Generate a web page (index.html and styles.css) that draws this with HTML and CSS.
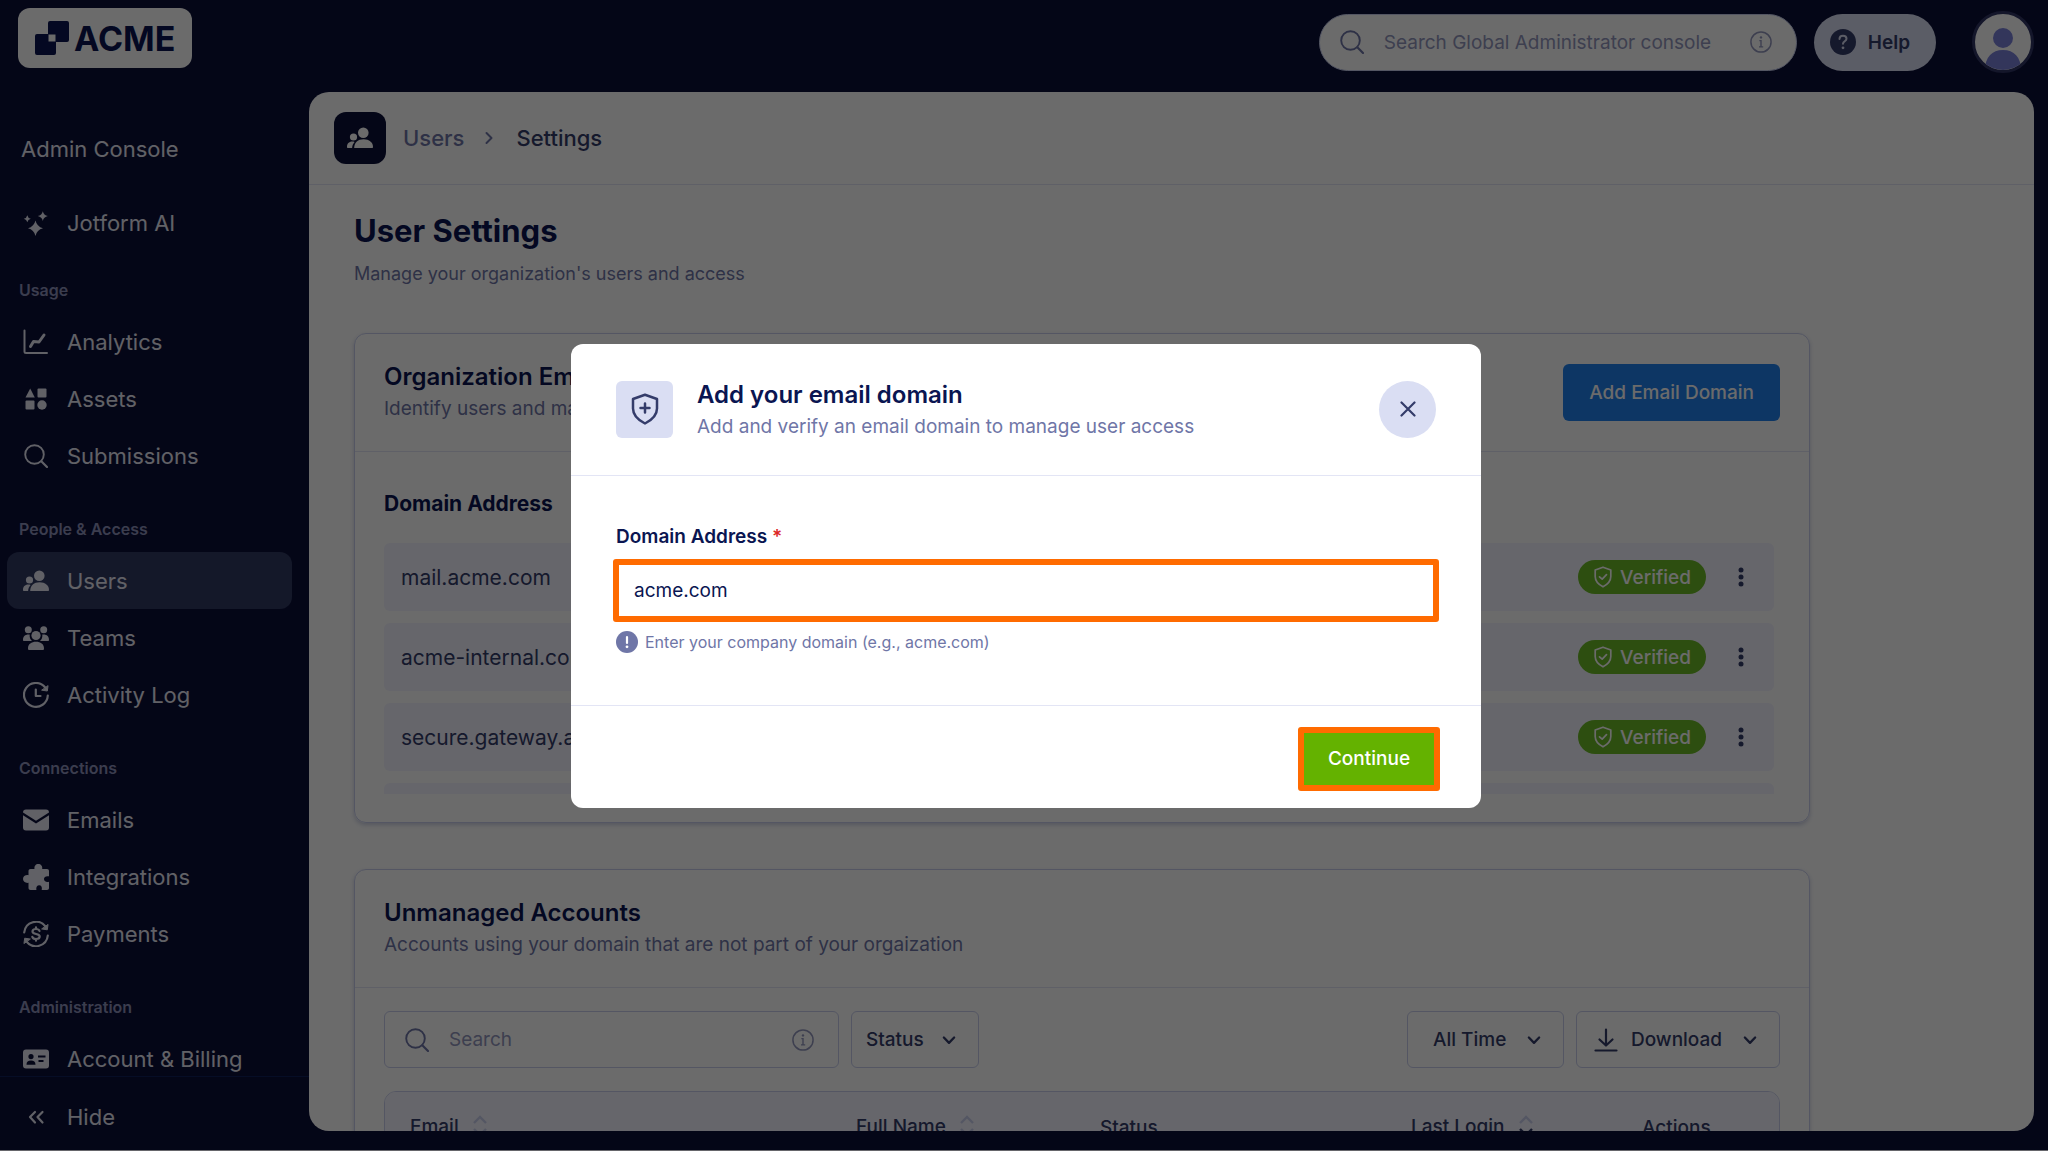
FILE: index.html
```
<!DOCTYPE html>
<html lang="en">
<head>
  <meta charset="UTF-8" />
  <meta name="viewport" content="width=device-width, initial-scale=1.0"/>
  <title>User Settings - Admin Console</title>
  <link rel="stylesheet" href="styles.css">
</head>
<body>

  <!-- shared icons -->
  <svg class="sprite" aria-hidden="true">
    <symbol id="i-search" viewBox="0 0 24 24"><circle cx="10.500" cy="10.500" r="9.300" fill="none" stroke="currentColor" stroke-width="1.900"/><path d="M17.300 17.300 23 23" stroke="currentColor" stroke-width="2.200" stroke-linecap="round"/></symbol>
    <symbol id="i-info" viewBox="0 0 24 24"><circle cx="12" cy="12" r="11" fill="none" stroke="currentColor" stroke-width="1.600"/><circle cx="12" cy="7" r="1.300" fill="currentColor"/><path d="M10.200 10.500H12V17M9.800 17.300h4.600" fill="none" stroke="currentColor" stroke-width="1.500"/></symbol>
    <symbol id="i-users" viewBox="0 0 26 22"><circle cx="16.300" cy="5.700" r="5.300" fill="currentColor"/><path d="M7.200 21C7.200 15.500 11 12.300 16.600 12.300S26 15.500 26 20c0 .6-.4 1-1 1z" fill="currentColor"/><circle cx="6.500" cy="10" r="3.600" fill="currentColor"/><path d="M0 20c0-3 1.800-5.400 5.300-5.400.9 0 1.600.1 2.300.4C6 16.800 5.200 18.800 5.100 21H1c-.6 0-1-.4-1-1z" fill="currentColor"/></symbol>
    <symbol id="i-down" viewBox="0 0 14 14"><path d="M2.500 4.800 7 9.500l4.500-4.700" fill="none" stroke="currentColor" stroke-width="2" stroke-linecap="round" stroke-linejoin="round"/></symbol>
    <symbol id="i-sort" viewBox="0 0 16 24"><path d="M2 8l6-6 6 6M2 14l6 6 6-6" fill="none" stroke="currentColor" stroke-width="2.400"/></symbol>
    <symbol id="i-sort-desc" viewBox="0 0 16 24"><path d="M2 8l6-6 6 6" fill="none" stroke="currentColor" stroke-width="2.400"/><path d="M2 14l6 6 6-6" fill="none" stroke="#343c6a" stroke-width="2.400"/></symbol>
    <symbol id="i-check" viewBox="0 0 18 22"><path d="M9 1.200 16.800 4v6.500c0 4.500-3 7.800-7.800 10.300C4.200 18.300 1.200 15 1.200 10.500V4z" fill="none" stroke="currentColor" stroke-width="1.700" stroke-linejoin="round"/><path d="M5.500 10.800 8.200 13.200 12.500 8.600" fill="none" stroke="currentColor" stroke-width="1.700" stroke-linecap="round" stroke-linejoin="round"/></symbol>
    <symbol id="i-dots" viewBox="0 0 6 20"><circle cx="3" cy="3" r="2.500" fill="currentColor"/><circle cx="3" cy="10" r="2.500" fill="currentColor"/><circle cx="3" cy="17" r="2.500" fill="currentColor"/></symbol>
  </svg>

  <div class="app">
    <aside class="sidebar">
      <a class="logo" href="#">
        <svg width="36" height="36" viewBox="0 0 36 36"><path fill-rule="evenodd" fill="currentColor" d="M16 1h17a2 2 0 0 1 2 2v17a2 2 0 0 1-2 2H22v11a2 2 0 0 1-2 2H3a2 2 0 0 1-2-2V16a2 2 0 0 1 2-2h11V3a2 2 0 0 1 2-2zM14.500 14.500v7h7v-7z"/></svg>
        ACME
      </a>
      <nav class="menu">
        <div class="menu-title">Admin Console</div>
        <a class="item" href="#"><svg viewBox="0 0 26 26" fill="currentColor"><path d="M12.500 10.500Q13.800 16.500 20 18.300 13.800 19.800 12.500 26 11 19.800 5 18.300 11 16.500 12.500 10.500zM19.800 1.300Q20.700 5.200 24.800 6.100 20.700 7 19.800 11 18.900 7 14.800 6.100 18.900 5.200 19.800 1.300zM4.300 5.300Q4.900 8.200 7.800 8.800 4.900 9.400 4.300 12.300 3.700 9.400.8 8.800 3.700 8.200 4.300 5.300z"/></svg>Jotform AI</a>

        <div class="group first">Usage</div>
        <a class="item" href="#"><svg viewBox="0 0 26 26" fill="none" stroke="currentColor" stroke-linecap="round" stroke-linejoin="round"><path d="M1.500 1.500V22.500a1.500 1.500 0 0 0 1.500 1.500H24" stroke-width="2"/><path d="M7.500 17.500 10.500 12.500 16 13 21 6" stroke-width="3"/></svg>Analytics</a>
        <a class="item" href="#"><svg viewBox="0 0 26 26" fill="currentColor"><path d="M7.200 2.500 11.800 11.500H2.500z"/><rect x="14.500" y="2.500" width="9" height="9" rx="1"/><rect x="2.500" y="14.500" width="9" height="9" rx="1"/><circle cx="19" cy="19" r="4.700"/></svg>Assets</a>
        <a class="item" href="#"><svg viewBox="-1 -1 26 26"><use href="#i-search" width="24" height="24"/></svg>Submissions</a>

        <div class="group">People &amp; Access</div>
        <a class="item active" href="#"><svg viewBox="0 0 26 26"><use href="#i-users" y="2" width="26" height="22"/></svg>Users</a>
        <a class="item" href="#"><svg viewBox="0 0 26 26" fill="currentColor"><circle cx="5.300" cy="4.800" r="3.500"/><circle cx="20.700" cy="4.800" r="3.500"/><circle cx="13" cy="10.500" r="4.600"/><path d="M5 23.500C5 19 8.500 16.800 13 16.800s8 2.200 8 6.700c0 1-.5 1.500-1.500 1.500h-13C5.500 25 5 24.500 5 23.500zM0 15c0-3.300 1.800-5.500 5.500-5.500h1.200c-.3 2.800.5 4.800 2.300 6.500H1c-.6 0-1-.4-1-1zM26 15c0-3.300-1.800-5.500-5.500-5.500h-1.200c.3 2.800-.5 4.800-2.300 6.500h8c.6 0 1-.4 1-1z"/></svg>Teams</a>
        <a class="item" href="#"><svg viewBox="0 0 26 26" fill="none" stroke="currentColor" stroke-width="2.200" stroke-linecap="round" stroke-linejoin="round"><path d="M24.800 13.500A11.900 11.900 0 1 1 22 5.200"/><path d="M12.800 7.500V14h4.700"/><path d="M25 4 24.300 9 19 8.200z" fill="currentColor" stroke-width="1"/></svg>Activity Log</a>

        <div class="group">Connections</div>
        <a class="item" href="#"><svg viewBox="0 0 26 26" fill="currentColor"><path d="M0 5.500C0 3.500 1 2.500 3 2.500h20c2 0 3 1 3 3L13 13.800z"/><path d="M0 8.300 13 16.600 26 8.300V20.500c0 2-1 3-3 3H3c-2 0-3-1-3-3z"/></svg>Emails</a>
        <a class="item" href="#"><svg viewBox="0 0 26 26" fill="currentColor"><path d="M11.500 5C11 2 12.800 0 15.300 0s4.400 2 3.900 5H24c1.200 0 2 .8 2 2v5.300c-3-.6-5 .6-5 2.700s2 3.400 5 2.700V24c0 1.200-.8 2-2 2h-5.300c.7-3-.5-4.700-2.500-4.700s-3.400 1.700-2.800 4.700H7.500c-1.200 0-2-.8-2-2v-5.200C2.500 19.300 0 17.500 0 15s2.500-4.300 5.500-3.800V7c0-1.200.8-2 2-2z"/></svg>Integrations</a>
        <a class="item" href="#"><svg viewBox="0 0 26 26" fill="none" stroke="currentColor" stroke-width="2.200" stroke-linecap="round" stroke-linejoin="round"><path d="M1.200 11.500A11.900 11.900 0 0 1 22.500 5.500M24.800 14.500A11.900 11.900 0 0 1 3.500 20.500"/><path d="M25 3.800 24.300 8.800 19 8zM1 22.200 1.700 17.200 7 18z" fill="currentColor" stroke-width="1"/><path d="M16.500 10C16 8.500 14.800 8 13 8c-2.200 0-3.500 1-3.500 2.500 0 3.500 7.200 1.500 7.200 5 0 1.500-1.500 2.500-3.700 2.500-2 0-3.200-.7-3.700-2.200M13 6.300V8M13 18v1.700"/></svg>Payments</a>

        <div class="group">Administration</div>
        <a class="item" href="#"><svg viewBox="0 0 26 26"><path fill-rule="evenodd" fill="currentColor" d="M3 3.500h20a3 3 0 0 1 3 3v13a3 3 0 0 1-3 3H3a3 3 0 0 1-3-3v-13a3 3 0 0 1 3-3zM8 8a2.600 2.600 0 1 0 0 5.200A2.600 2.600 0 0 0 8 8zM3.500 18.800h9c0-3-1.600-4.300-4.500-4.300s-4.500 1.300-4.500 4.300zM15 9.500v2h7.500v-2zM15.500 14v2h5v-2z"/></svg>Account &amp; Billing</a>
      </nav>
      <div class="hide">
        <button class="item" type="button"><svg viewBox="0 0 26 26" fill="none" stroke="currentColor" stroke-width="2.200" stroke-linecap="round" stroke-linejoin="round"><path d="M12 8 7 13l5 5.500M19.500 8l-5 5 5 5.500"/></svg>Hide</button>
      </div>
    </aside>

    <div class="content">
      <header class="topbar">
        <label class="search">
          <svg width="24" height="24"><use href="#i-search"/></svg>
          <input type="search" placeholder="Search Global Administrator console" aria-label="Search Global Administrator console">
          <svg class="info" width="22" height="22"><use href="#i-info"/></svg>
        </label>
        <button class="help" type="button">
          <svg width="26" height="26" viewBox="0 0 26 26"><circle cx="13" cy="13" r="13" fill="currentColor"/><path d="M9.500 10C9.500 7.800 11 6.700 13 6.700s3.500 1.200 3.500 3.100c0 2.500-3.500 2.500-3.500 5" fill="none" stroke="#dadef3" stroke-width="2" stroke-linecap="round"/><circle cx="13" cy="18.800" r="1.400" fill="#dadef3"/></svg>
          Help
        </button>
        <button class="avatar" type="button" aria-label="Profile">
          <svg viewBox="0 0 56 56"><circle cx="28" cy="24" r="10" fill="#7a80da"/><path d="M10 56C10 43 17 36 28 36s18 7 18 20z" fill="#7a80da"/></svg>
        </button>
      </header>

      <main class="panel">
        <div class="crumbs">
          <span class="crumb-icon"><svg width="26" height="22"><use href="#i-users"/></svg></span>
          <a href="#">Users</a>
          <svg width="14" height="14" viewBox="0 0 14 14"><path d="M4.500 2 9.500 7l-5 5" fill="none" stroke="currentColor" stroke-width="2" stroke-linecap="round" stroke-linejoin="round"/></svg>
          <strong>Settings</strong>
        </div>

        <div class="page">
          <h1>User Settings</h1>
          <p class="sub lead">Manage your organization's users and access</p>

          <section class="card">
            <div class="card-head">
              <div>
                <h2>Organization Email Domains</h2>
                <p class="sub">Identify users and manage access by domain</p>
              </div>
              <button class="btn-blue" type="button">Add Email Domain</button>
            </div>
            <div class="domains">
              <h3>Domain Address</h3>
              <ul>
                <li><span>mail.acme.com</span><span class="badge"><svg width="18" height="22"><use href="#i-check"/></svg>Verified</span><button type="button" aria-label="More"><svg width="6" height="20"><use href="#i-dots"/></svg></button></li>
                <li><span>acme-internal.com</span><span class="badge"><svg width="18" height="22"><use href="#i-check"/></svg>Verified</span><button type="button" aria-label="More"><svg width="6" height="20"><use href="#i-dots"/></svg></button></li>
                <li><span>secure.gateway.acme.com</span><span class="badge"><svg width="18" height="22"><use href="#i-check"/></svg>Verified</span><button type="button" aria-label="More"><svg width="6" height="20"><use href="#i-dots"/></svg></button></li>
                <li></li>
              </ul>
            </div>
          </section>

          <section class="card">
            <div class="card-head">
              <div>
                <h2>Unmanaged Accounts</h2>
                <p class="sub">Accounts using your domain that are not part of your orgaization</p>
              </div>
            </div>
            <div class="tools">
              <label class="search box">
                <svg width="24" height="24"><use href="#i-search"/></svg>
                <input type="search" placeholder="Search" aria-label="Search accounts">
                <svg class="info" width="22" height="22"><use href="#i-info"/></svg>
              </label>
              <span class="drop status">
                <select aria-label="Status"><option>Status</option></select>
                <svg width="16" height="16"><use href="#i-down"/></svg>
              </span>
              <span class="drop time">
                <select aria-label="Time range"><option>All Time</option></select>
                <svg width="16" height="16"><use href="#i-down"/></svg>
              </span>
              <button class="download" type="button">
                <svg width="24" height="24" viewBox="0 0 24 24" fill="none" stroke="currentColor" stroke-width="2.200" stroke-linecap="round" stroke-linejoin="round"><path d="M12 1.500V17M5.500 11.500 12 17.500l6.500-6M1.500 22.500h21"/></svg>
                Download
                <svg class="caret" width="16" height="16"><use href="#i-down"/></svg>
              </button>
            </div>
            <div class="table-wrap">
              <table>
                <thead>
                  <tr>
                    <th class="c-email">Email <svg width="16" height="24"><use href="#i-sort"/></svg></th>
                    <th class="c-name">Full Name <svg width="16" height="24"><use href="#i-sort"/></svg></th>
                    <th class="c-status">Status</th>
                    <th class="c-login">Last Login <svg width="16" height="24"><use href="#i-sort-desc"/></svg></th>
                    <th>Actions</th>
                  </tr>
                </thead>
              </table>
            </div>
          </section>
        </div>
      </main>
    </div>
  </div>

  <div class="overlay">
    <form class="modal" role="dialog" aria-labelledby="modal-title">
      <div class="modal-head">
        <span class="modal-icon"><svg width="28" height="32" viewBox="0 0 28 32" fill="none" stroke="currentColor" stroke-width="2.500" stroke-linecap="round" stroke-linejoin="round"><path d="M14 1.800 26 6v9.500c0 6.500-5 11.500-12 15-7-3.500-12-8.500-12-15V6z"/><path d="M14 10.500v9M9.500 15h9"/></svg></span>
        <div class="modal-text">
          <h2 id="modal-title">Add your email domain</h2>
          <p class="sub">Add and verify an email domain to manage user access</p>
        </div>
        <button class="close" type="button" aria-label="Close"><svg width="16" height="16" viewBox="0 0 16 16"><path d="M1.500 1.500l13 13M14.500 1.500l-13 13" stroke="currentColor" stroke-width="2.200" stroke-linecap="round"/></svg></button>
      </div>
      <div class="modal-body">
        <label for="domain">Domain Address <span>*</span></label>
        <input id="domain" type="text" value="acme.com">
        <p class="hint"><svg width="22" height="22" viewBox="0 0 22 22"><circle cx="11" cy="11" r="11" fill="currentColor"/><path d="M11 6v6" stroke="#fff" stroke-width="2.200" stroke-linecap="round"/><circle cx="11" cy="15.800" r="1.400" fill="#fff"/></svg>Enter your company domain (e.g., acme.com)</p>
      </div>
      <div class="modal-foot">
        <button class="btn-green" type="button">Continue</button>
      </div>
    </form>
  </div>

</body>
</html>
```
FILE: styles.css
```
* {
  margin: 0;
  padding: 0;
  box-sizing: border-box;
}

html, body {
  height: 100%;
  overflow: hidden;
  font-family: Inter, "Liberation Sans", sans-serif;
  font-size: 19px;
  background: #0b0f38;
  color: #0a1551;
}

button, input, select {
  font: inherit;
  color: inherit;
  border: none;
  background: none;
}

button {
  cursor: pointer;
}

a {
  color: inherit;
  text-decoration: none;
}

svg {
  display: block;
  flex-shrink: 0;
}

.sprite {
  position: absolute;
  width: 0;
  height: 0;
}

.app {
  display: flex;
  height: 100vh;
  border-bottom: 1px solid #f3f3fe;
}

/* Sidebar */
.sidebar {
  width: 309px;
  flex-shrink: 0;
  display: flex;
  flex-direction: column;
  color: #e6e7f4;
}

.logo {
  display: flex;
  align-items: center;
  gap: 4px;
  align-self: flex-start;
  flex-shrink: 0;
  height: 60px;
  margin: 8px 0 0 18px;
  padding: 0 17px 0 16px;
  border-radius: 12px;
  background: #fff;
  color: #0a1551;
  font-size: 34px;
  font-weight: 700;
}

.menu {
  flex: 1;
  min-height: 0;
  overflow: hidden;
  padding: 65px 17px 0 7px;
}

.menu-title {
  padding-left: 14px;
  font-size: 22px;
  line-height: 32px;
  margin-bottom: 29px;
}

.item {
  display: flex;
  align-items: center;
  gap: 18px;
  width: 100%;
  height: 57px;
  padding-left: 16px;
  border-radius: 12px;
  font-size: 22px;
}

.item svg {
  width: 26px;
  height: 26px;
}

.item.active {
  background: #303962;
}

.group {
  padding: 34px 0 12px 12px;
  font-size: 16px;
  font-weight: 600;
  line-height: 22px;
  color: #8d91bb;
}

.group.first {
  padding-top: 28px;
}

.hide {
  border-top: 1px solid #101f5c;
  padding: 11px 17px 5px 7px;
}

/* Top bar */
.content {
  flex: 1;
  min-width: 0;
  display: flex;
  flex-direction: column;
  padding: 0 14px 19px 0;
}

.topbar {
  display: flex;
  align-items: center;
  justify-content: flex-end;
  height: 92px;
  flex-shrink: 0;
  padding-bottom: 8px;
}

.search {
  display: flex;
  align-items: center;
  width: 478px;
  height: 57px;
  padding: 0 24px 0 20px;
  border: 1px solid #c8ceed;
  border-radius: 29px;
  background: #fff;
  color: #6f76a7;
}

.search input {
  flex: 1;
  min-width: 0;
  margin: 0 12px 0 20px;
  outline: none;
}

.search input::placeholder {
  color: #9296bd;
  opacity: 1;
}

.info {
  color: #9296bd;
}

.help {
  display: flex;
  align-items: center;
  gap: 12px;
  height: 57px;
  margin: 0 36px 0 17px;
  padding: 0 26px 0 16px;
  border-radius: 29px;
  background: #dadef3;
  color: #343c6a;
  font-weight: 600;
}

.avatar {
  width: 62px;
  height: 62px;
  border: 3px solid #303565;
  border-radius: 50%;
  background: #fff;
  overflow: hidden;
}

/* Main panel */
.panel {
  flex: 1;
  min-height: 0;
  overflow: hidden;
  border-radius: 20px;
  background: #fff;
}

.crumbs {
  display: flex;
  align-items: center;
  height: 93px;
  padding: 0 25px;
  border-bottom: 1px solid #e3e5f5;
  font-size: 22px;
  color: #6f76a7;
}

.crumbs a {
  margin: 0 18px 0 17px;
  font-weight: 500;
}

.crumbs strong {
  margin-left: 20px;
  color: #343c6a;
  font-weight: 500;
}

.crumb-icon {
  display: flex;
  align-items: center;
  justify-content: center;
  width: 52px;
  height: 52px;
  border-radius: 12px;
  background: #0b0f38;
  color: #fff;
}

.page {
  padding: 24px 45px;
}

h1 {
  font-size: 31px;
  font-weight: 700;
  line-height: 44px;
  margin-bottom: 8px;
}

.sub {
  color: #6f76a7;
  font-size: 19px;
  line-height: 26px;
}

.sub.lead {
  font-size: 18px;
}

h2 {
  font-size: 24px;
  font-weight: 600;
  line-height: 34px;
  margin-bottom: 2px;
}

.card {
  max-width: 1456px;
  margin-top: 46px;
  border: 1px solid #c8ceed;
  border-radius: 12px;
  box-shadow: 0 2px 4px rgba(84, 95, 160, 0.3);
}

.card-head {
  display: flex;
  align-items: center;
  justify-content: space-between;
  height: 118px;
  padding: 0 29px;
  border-bottom: 1px solid #e3e5f5;
}

.card-head > div {
  padding-bottom: 4px;
}

.btn-blue {
  height: 57px;
  padding: 0 26px;
  border-radius: 6px;
  background: #2080ee;
  color: #fff;
  font-weight: 500;
}

.domains {
  padding: 38px 29px 28px;
}

.domains h3 {
  font-size: 21px;
  font-weight: 700;
  line-height: 28px;
  margin-bottom: 25px;
}

.domains ul {
  list-style: none;
  height: 251px;
  overflow: hidden;
  padding-right: 6px;
}

.domains li {
  display: flex;
  align-items: center;
  height: 68px;
  margin-bottom: 12px;
  padding: 0 30px 0 17px;
  border-radius: 6px;
  background: #f3f3fe;
  color: #343c6a;
  font-size: 21px;
}

.badge {
  display: flex;
  align-items: center;
  gap: 8px;
  height: 34px;
  margin-left: auto;
  padding: 0 15px 0 16px;
  border-radius: 17px;
  background: #6cba28;
  color: #fff;
  font-size: 19px;
  font-weight: 500;
}

.domains li button {
  padding: 8px;
  margin-left: 24px;
  margin-right: -8px;
}

/* Filters */
.tools {
  display: flex;
  gap: 12px;
  padding: 23px 29px;
}

.search.box {
  width: 455px;
  border-radius: 6px;
}

.drop, .download {
  position: relative;
  height: 57px;
  border: 1px solid #c8ceed;
  border-radius: 6px;
  color: #343c6a;
  font-weight: 500;
}

.drop select {
  appearance: none;
  width: 100%;
  height: 100%;
  padding-left: 14px;
  cursor: pointer;
}

.drop svg {
  position: absolute;
  right: 21px;
  top: 20px;
  pointer-events: none;
}

.status {
  width: 128px;
}

.time {
  width: 157px;
  margin-left: auto;
}

.time select {
  padding-left: 25px;
}

.download {
  display: flex;
  align-items: center;
  gap: 13px;
  width: 204px;
  padding: 0 21px 0 17px;
}

.caret {
  margin-left: auto;
}

.table-wrap {
  margin: 0 29px;
  height: 200px;
  border: 1px solid #c8ceed;
  border-radius: 12px 12px 0 0;
  overflow: hidden;
}

table {
  width: 100%;
  table-layout: fixed;
  border-collapse: collapse;
}

th {
  height: 70px;
  padding-left: 25px;
  background: #f3f3fe;
  color: #343c6a;
  font-weight: 500;
  text-align: left;
}

th svg {
  display: inline-block;
  vertical-align: middle;
  margin-left: 8px;
  color: #c8ceed;
}

.c-email {
  width: 446px;
}

.c-name {
  width: 244px;
}

.c-status {
  width: 311px;
}

.c-login {
  width: 231px;
}

/* Modal */
.overlay {
  position: fixed;
  inset: 0;
  display: flex;
  align-items: center;
  justify-content: center;
  padding-left: 4px;
  background: rgba(0, 0, 0, 0.58);
}

.modal {
  width: 910px;
  max-width: 94vw;
  border-radius: 12px;
  background: #fff;
}

.modal-head {
  display: flex;
  align-items: center;
  height: 132px;
  padding: 0 45px;
  border-bottom: 1px solid #e3e5f5;
}

.modal-icon, .close {
  display: flex;
  align-items: center;
  justify-content: center;
  width: 57px;
  height: 57px;
  border-radius: 6px;
  background: #dadef3;
  color: #343c6a;
}

.close {
  border-radius: 50%;
}

.modal-text {
  flex: 1;
  padding-left: 24px;
}

.modal-body {
  padding: 47px 42px 51px;
  border-bottom: 1px solid #e3e5f5;
}

.modal-body label {
  display: block;
  padding-left: 3px;
  font-weight: 600;
  line-height: 28px;
  margin-bottom: 8px;
}

.modal-body label span {
  color: #dc2626;
}

.modal-body input {
  display: block;
  width: 100%;
  height: 63px;
  padding: 0 15px;
  border: 6px solid #ff6b00;
  border-radius: 3px;
  background: #fff;
  outline: none;
}

.hint {
  display: flex;
  align-items: center;
  gap: 7px;
  padding: 8px 0 0 3px;
  font-size: 16px;
  line-height: 24px;
  color: #6f76a7;
}

.modal-foot {
  display: flex;
  justify-content: flex-end;
  padding: 21px 41px 17px;
}

.btn-green {
  width: 142px;
  height: 64px;
  border: 6px solid #ff6b00;
  border-radius: 3px;
  background: #64b200;
  color: #fff;
  font-weight: 500;
}
```
